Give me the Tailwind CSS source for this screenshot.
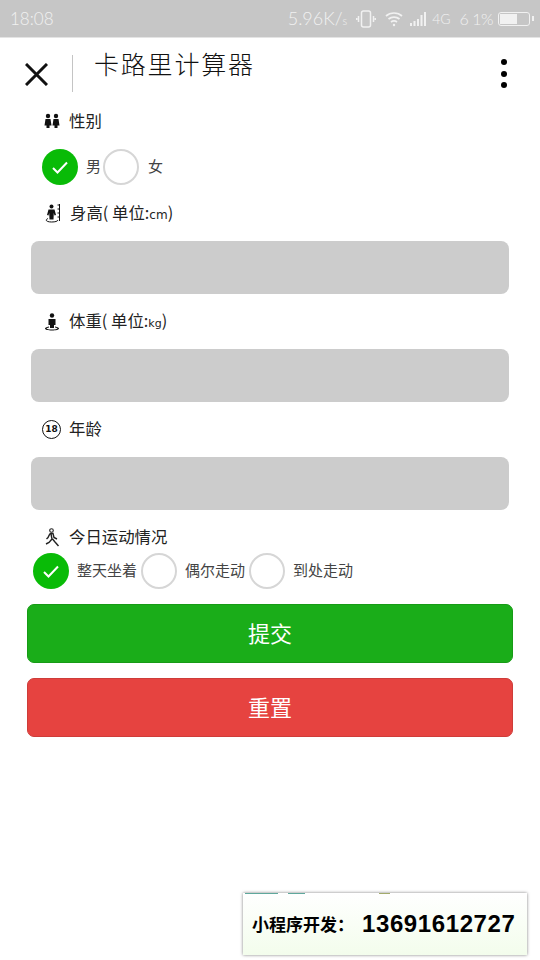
<!DOCTYPE html>
<html lang="zh" class="bg-white">
<head>
    <meta charset="UTF-8">
    <title>卡路里计算器</title>
    <meta name="viewport" content="width=device-width, initial-scale=1.0">
    <script src="https://cdn.jsdelivr.net/npm/@tailwindcss/browser@4"></script>
</head>
<body class="relative w-[540px] h-[960px] overflow-hidden bg-white font-['Noto_Sans_CJK_SC','Noto_Sans',sans-serif]">

    <!-- status bar -->
    <div class="h-[38px] bg-[#c6c6c6] border-b border-[#e4e4e4] flex items-center justify-between pl-[10px] pr-[8px] text-[#f1f1f1] font-['Lato',sans-serif] font-light">
        <span class="text-[17px]">18:08</span>
        <div class="flex items-center">
            <span class="text-[18px]">5.96K/<span class="text-[11px]">s</span></span>
            <svg class="ml-[9px]" width="20" height="18" viewBox="0 0 20 18" fill="none" stroke="#f1f1f1" stroke-width="1.5"><rect x="5.5" y="1" width="9" height="16" rx="2"/><path d="M2.5 6v6M17.5 6v6M0.7 8v2M19.3 8v2"/></svg>
            <svg class="ml-[9px]" width="18" height="16" viewBox="0 0 18 16" fill="none" stroke="#f1f1f1" stroke-width="1.7"><path d="M1 5c4.500-4 11.500-4 16 0M3.500 8c3-2.600 8-2.600 11 0M6 11c1.700-1.300 4.300-1.300 6 0"/><circle cx="9" cy="14" r="1.200" fill="#f1f1f1" stroke="none"/></svg>
            <svg class="ml-[7px]" width="17" height="16" viewBox="0 0 17 16" fill="#f1f1f1"><rect x="0" y="12" width="2" height="3"/><rect x="3.500" y="10" width="2" height="5"/><rect x="7" y="8" width="2" height="7"/><rect x="10.500" y="4" width="2" height="11"/><rect x="14" y="1" width="2" height="14"/></svg>
            <span class="text-[14px] ml-[5px]">4G</span>
            <span class="text-[16px] ml-[9px] tracking-[-0.500px]">6 1%</span>
            <div class="ml-[5px] w-[32px] h-[14px] border-[1.5px] border-[#f1f1f1] rounded-[3px] p-[1px] relative mr-[2px]">
                <div class="w-[60%] h-full bg-[#f1f1f1]"></div>
                <div class="absolute right-[-5px] top-[3px] w-[2px] h-[5px] bg-[#f1f1f1]"></div>
            </div>
        </div>
    </div>

    <!-- nav -->
    <div class="h-[66px] flex items-start relative">
        <svg class="ml-[25px] mt-[25px]" width="23" height="23" viewBox="0 0 23 23" stroke="#111" stroke-width="3" fill="none"><path d="M1 1l21 21M22 1L1 22"/></svg>
        <div class="ml-[24px] mt-[17px] w-px h-[37px] bg-[#c4c4c4]"></div>
        <div class="ml-[21px] mt-[7px] text-[25px] leading-[36px] tracking-[1.800px] font-['Noto_Sans_CJK_JP',serif] font-light text-[#111]">卡路里计算器</div>
        <div class="absolute left-[501px] top-[21px] flex flex-col gap-[5.500px]">
            <div class="w-[6px] h-[6px] rounded-full bg-black"></div>
            <div class="w-[6px] h-[6px] rounded-full bg-black"></div>
            <div class="w-[6px] h-[6px] rounded-full bg-black"></div>
        </div>
    </div>

    <!-- form -->
    <div class="text-[16.400px] text-[#222]">
        <div class="h-[34px] flex items-center pl-[44px] gap-[9px]">
            <svg width="16" height="16" viewBox="0 0 16 16" fill="#111"><circle cx="4" cy="3" r="2.200"/><circle cx="12" cy="3" r="2.200"/><path d="M1.500 6h5l1 6.500H5.500V15h-3v-2.500H.5zM9.500 6h5l1 6.500h-2V15h-3v-2.500h-2z"/></svg>
            <span class="-mt-[2px]">性别</span>
        </div>
        <div class="h-[58px] flex items-center pl-[42px] text-[#444] text-[15px]">
            <span class="w-[36px] h-[36px] rounded-full bg-[#09bb07] flex items-center justify-center">
                <svg width="16" height="13" viewBox="0 0 16 13" fill="none" stroke="#fff" stroke-width="2"><path d="M1 7l4.500 4.500L15 1.500"/></svg>
            </span>
            <span class="ml-[8px] w-[17px] -mt-[1px]">男</span>
            <span class="w-[36px] h-[36px] rounded-full border-2 border-[#d6d6d6]"></span>
            <span class="ml-[9px] -mt-[1px]">女</span>
        </div>

        <div class="h-[34px] flex items-center pl-[45px] gap-[8px]">
            <svg width="17" height="20" viewBox="0 0 17 20" fill="none" stroke="#111"><circle cx="6.500" cy="3.500" r="2" fill="#111" stroke="none"/><path d="M3.500 6.500h6l1.500 5.500-1.500.5-.7-2.500-.3 6.500h-4l-.3-6.500-.7 2.500-1.500-.5z" fill="#111" stroke="none"/><path d="M14.500 1v17M12.500 2h2M12.500 6h2M12.500 10h2M12.500 14h2M3 15.500c-3.500 1.500-1.500 3.500 3.500 3.500 4 0 6-.7 6.500-2" stroke-width="1"/></svg>
            <span class="-mt-[2px]">身高( 单位:<span class="text-[12px] font-['DejaVu_Sans',sans-serif]">cm</span>)</span>
        </div>
        <div class="mt-[11px] mx-[31px] h-[53px] bg-[#cccccc] rounded-[8px]"></div>

        <div class="h-[55px] flex items-center pl-[44px] gap-[9px]">
            <svg width="16" height="18" viewBox="0 0 16 18" fill="#111"><circle cx="8" cy="2.500" r="2.200"/><path d="M4.500 6h7v6H10v3H6v-3H4.500z"/><path d="M5 13.500c-3 .5-4 1.200-4 2 0 1.200 3 2 7 2s7-.8 7-2c0-.8-1-1.500-4-2v1c1.500.3 2.500.6 2.500 1 0 .5-2.500 1-5.500 1s-5.500-.5-5.500-1c0-.4 1-.7 2.500-1z"/></svg>
            <span class="-mt-[2px]">体重( 单位:<span class="text-[11px] font-['DejaVu_Sans',sans-serif]">kg</span>)</span>
        </div>
        <div class="mx-[31px] h-[53px] bg-[#cccccc] rounded-[8px]"></div>

        <div class="h-[55px] flex items-center pl-[42px] gap-[8px]">
            <span class="w-[19px] h-[19px] rounded-full border-[1.500px] border-[#111] flex items-center justify-center text-[9px] font-bold font-['DejaVu_Sans',sans-serif] text-[#111]">18</span>
            <span class="-mt-[2px]">年龄</span>
        </div>
        <div class="mx-[31px] h-[53px] bg-[#cccccc] rounded-[8px]"></div>

        <div class="h-[52px] flex items-center pl-[45px] gap-[9px] pt-[2px]">
            <svg class="w-[15px] h-[19px]" viewBox="0 0 15 19" fill="none" stroke="#222" stroke-width="1.400"><circle cx="6.500" cy="2.500" r="1.800" stroke-width="1.100"/><path d="M5 5.500h3l1 4 3 1.500M5 5.500L3 9.500 1.500 11M6 6l1 5-3 3.500-3 1.500M7.500 11l2.500 3 3.500 4"/></svg>
            <span class="-mt-[2px]">今日运动情况</span>
        </div>
        <div class="h-[16px] mt-[1px] flex items-center pl-[33px] text-[#444] text-[15px]">
            <span class="shrink-0 w-[36px] h-[36px] rounded-full bg-[#09bb07] flex items-center justify-center">
                <svg width="16" height="13" viewBox="0 0 16 13" fill="none" stroke="#fff" stroke-width="2"><path d="M1 7l4.500 4.500L15 1.500"/></svg>
            </span>
            <span class="ml-[8px] w-[64px] -mt-[1px]">整天坐着</span>
            <span class="shrink-0 w-[36px] h-[36px] rounded-full border-2 border-[#d6d6d6]"></span>
            <span class="ml-[8px] w-[64px] -mt-[1px]">偶尔走动</span>
            <span class="shrink-0 w-[36px] h-[36px] rounded-full border-2 border-[#d6d6d6]"></span>
            <span class="ml-[8px] -mt-[1px]">到处走动</span>
        </div>

        <div class="mt-[25px] mx-[27px] h-[59px] pb-[2px] bg-[#1aad19] border border-[#179b16] rounded-[7px] flex items-center justify-center text-white text-[22px]">提交</div>
        <div class="mt-[15px] mx-[27px] h-[59px] pb-[2px] bg-[#e64340] border border-[#ce3c39] rounded-[7px] flex items-center justify-center text-white text-[22px]">重置</div>
    </div>

    <!-- contact badge, sits over the page -->
    <div class="absolute left-[243px] top-[893px] w-[284px] h-[62px] bg-gradient-to-b from-white to-[#f3fdec] shadow-[0_0_3px_rgba(0,0,0,0.5)] flex items-center pl-[9px] text-black">
        <span class="absolute left-[2px] top-0 w-[33px] h-px bg-[#5fa89c]"></span>
        <span class="absolute left-[45px] top-0 w-[17px] h-px bg-[#5fa89c]"></span>
        <span class="absolute left-[136px] top-0 w-[11px] h-px bg-[#a3ab6c]"></span>
        <span class="text-[17px] font-bold">小程序开发：</span>
        <span class="ml-[8px] text-[24px] font-bold font-['Liberation_Sans',sans-serif] tracking-[0.600px]">13691612727</span>
    </div>

</body>
</html>
